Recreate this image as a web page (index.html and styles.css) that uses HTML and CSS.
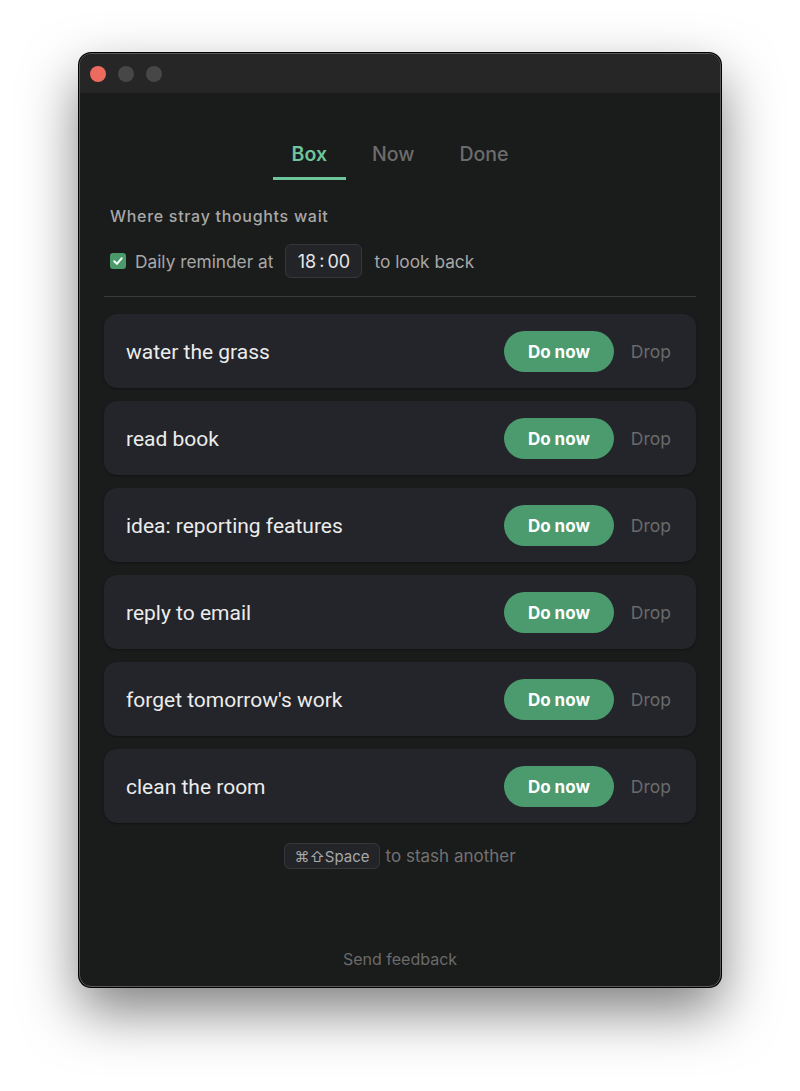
FILE: index.html
```html
<!DOCTYPE html>
<html>
<head>
<meta charset="utf-8">
<link rel="stylesheet" href="styles.css">
</head>
<body>
<div class="window">
  <div class="titlebar">
    <span class="light red"></span>
    <span class="light"></span>
    <span class="light"></span>
  </div>
  <div class="content">
    <nav class="tabs">
      <span class="tab active">Box</span>
      <span class="tab">Now</span>
      <span class="tab">Done</span>
    </nav>
    <div class="subtitle">Where stray thoughts wait</div>
    <div class="reminder">
      <span class="check"><svg width="12" height="12" viewBox="0 0 12 12"><path d="M2.2 6.3 L4.9 8.9 L9.8 3.2" fill="none" stroke="#fff" stroke-width="2" stroke-linecap="round" stroke-linejoin="round"/></svg></span>
      <span class="label">Daily reminder at</span>
      <span class="time">18<span class="colon">:</span>00</span>
      <span class="label">to look back</span>
    </div>
    <div class="sep"></div>
    <div class="list">
      <div class="card"><span class="item">water the grass</span><span class="btn">Do now</span><span class="drop">Drop</span></div>
      <div class="card"><span class="item">read book</span><span class="btn">Do now</span><span class="drop">Drop</span></div>
      <div class="card"><span class="item">idea: reporting features</span><span class="btn">Do now</span><span class="drop">Drop</span></div>
      <div class="card"><span class="item">reply to email</span><span class="btn">Do now</span><span class="drop">Drop</span></div>
      <div class="card"><span class="item">forget tomorrow's work</span><span class="btn">Do now</span><span class="drop">Drop</span></div>
      <div class="card"><span class="item">clean the room</span><span class="btn">Do now</span><span class="drop">Drop</span></div>
    </div>
    <div class="hint"><span class="kbd">⌘⇧Space</span><span>to stash another</span></div>
    <div class="feedback">Send feedback</div>
  </div>
</div>
</body>
</html>
```
FILE: styles.css
```css
* { box-sizing: border-box; }
html, body { margin: 0; background: #ffffff; }
body {
  padding: 53px 79px 0 79px;
  font-family: Inter, "Noto Sans", sans-serif;
  height: 1091px;
  overflow: hidden;
}
.window {
  width: 642px;
  height: 934px;
  background: #1a1b1b;
  border-radius: 12px;
  border: 1px solid #5a5a5a;
  box-shadow: 0 24px 55px rgba(0,0,0,0.5), 0 0 0 1px #000;
  display: flex;
  flex-direction: column;
  overflow: hidden;
}
.titlebar {
  height: 39px;
  background: #262626;
  display: flex;
  align-items: center;
  gap: 12px;
  padding-left: 10px;
  flex: none;
}
.light {
  width: 16px; height: 16px; border-radius: 50%;
  background: #474747;
}
.light.red { background: #ec6a5e; }
.content {
  flex: 1;
  display: flex;
  flex-direction: column;
  padding: 49px 24px 17px 24px;
}
.tabs {
  display: flex;
  justify-content: center;
  gap: 7px;
}
.tab {
  font-size: 19.5px;
  line-height: 24px;
  font-weight: 500;
  color: #6c6c6c;
  padding: 0 19px 11px 19px;
  border-bottom: 3px solid transparent;
}
.tab.active {
  color: #6ec59b;
  font-weight: 600;
  border-bottom-color: #6ec59b;
}
.subtitle {
  margin-top: 26px;
  padding-left: 6px;
  font-size: 16px;
  line-height: 20px;
  color: #a8a8a8;
  font-weight: 500;
  letter-spacing: 0.7px;
}
.reminder {
  margin-top: 18px;
  padding-left: 6px;
  display: flex;
  align-items: center;
  height: 34px;
}
.check {
  width: 16px; height: 16px;
  border-radius: 3px;
  background: #4a9a6c;
  display: flex; align-items: center; justify-content: center;
  margin-right: 9px;
}
.label {
  font-size: 17.3px;
  color: #a8a8a8;
}
.time {
  margin: 0 12px;
  height: 34px;
  width: 77px;
  display: flex; align-items: center; justify-content: center;
  background: #222428;
  border: 1px solid #35373b;
  border-radius: 6px;
  color: #e6e6e6;
  font-size: 18px;
}
.colon { margin: 0 3px; position: relative; top: -1px; }
.sep {
  margin-top: 18px;
  height: 1px;
  background: #3a3b3d;
}
.list {
  margin-top: 17px;
  display: flex;
  flex-direction: column;
  gap: 13px;
}
.card {
  height: 74px;
  background: #23252a;
  border-radius: 13px;
  display: flex;
  align-items: center;
  padding: 1px 25px 0 22px;
  box-shadow: 0 1px 2px rgba(0,0,0,0.35);
}
.item {
  flex: 1;
  font-size: 21px;
  color: #ececec;
  font-family: Roboto, Inter, sans-serif;
}
.btn {
  width: 110px;
  height: 41px;
  border-radius: 21px;
  background: #4b9b6e;
  color: #ffffff;
  font-weight: 700;
  font-size: 17px;
  display: flex; align-items: center; justify-content: center;
}
.drop {
  margin-left: 17px;
  font-size: 17.5px;
  color: #6a6a6a;
}
.hint {
  margin-top: 20px;
  display: flex;
  justify-content: center;
  align-items: center;
  gap: 6px;
  font-size: 17px;
  color: #727272;
}
.kbd {
  height: 26px;
  padding: 0 9px;
  display: flex; align-items: center;
  border: 1px solid #35373b;
  background: #222428;
  border-radius: 6px;
  font-size: 15px;
  color: #a8a8a8;
}
.feedback {
  margin-top: auto;
  text-align: center;
  font-size: 16px;
  color: #6a6a6a;
  line-height: 20px;
}
```
